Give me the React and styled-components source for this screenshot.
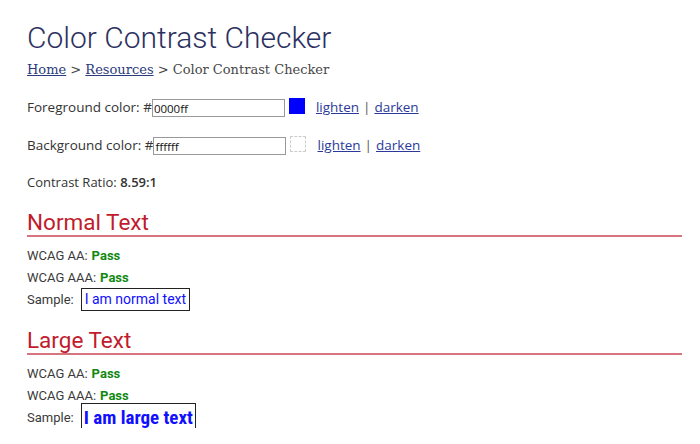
import React from 'react';
import styled, { createGlobalStyle } from 'styled-components';

const Global = createGlobalStyle`
  body {
    margin: 0;
    background: #fff;
    font-family: "Open Sans", "DejaVu Sans", sans-serif;
    color: #333;
  }
`;

const Page = styled.div`
  padding: 21px 18px 0 27px;
`;

const Title = styled.h1`
  margin: 0;
  font-family: Roboto, sans-serif;
  font-weight: 300;
  font-size: 30px;
  line-height: 34px;
  color: #2c3160;
`;

const Crumbs = styled.div`
  margin-top: 7px;
  font-family: "DejaVu Serif", serif;
  font-size: 13px;
  color: #484848;
  a {
    color: #2b3a7a;
  }
`;

const Field = styled.div`
  display: flex;
  align-items: center;
  margin-top: ${(p) => p.gap}px;
  font-size: 13.5px;
  height: 20px;
`;

const Input = styled.input`
  width: 129px;
  height: 16px;
  padding: 0 1px;
  margin: 2px 0 0 0;
  border: 1px solid #999;
  font-family: "Open Sans", sans-serif;
  font-size: 11.5px;
  color: #111;
`;

const Swatch = styled.span`
  width: 14px;
  height: 14px;
  margin: -3px 11px 0 4px;
  background: ${(p) => p.bg};
  border: 1px dashed ${(p) => (p.bg === '#fff' ? '#ccc' : '#00f')};
`;

const Link = styled.a`
  color: #2b3a9a;
`;

const Sep = styled.span`
  margin: 0 4px;
  color: #555;
`;

const Ratio = styled.div`
  margin-top: 18px;
  font-size: 13px;
  b {
    font-weight: 600;
  }
`;

const Heading = styled.h2`
  margin: ${(p) => p.top}px 0 0;
  font-family: Roboto, sans-serif;
  font-weight: 400;
  font-size: 22.5px;
  line-height: 26px;
  color: #c11b2d;
  border-bottom: 2px solid #d7757e;
`;

const Rows = styled.div`
  margin-top: 7px;
  font-family: Roboto, sans-serif;
  font-size: 13px;
  color: #3a3a3a;
`;

const Row = styled.div`
  height: 22px;
  display: flex;
  align-items: center;
`;

const Pass = styled.b`
  color: #118811;
  margin-left: 4px;
  font-weight: 700;
`;

const Sample = styled.span`
  margin-left: 7px;
  border: 1px solid #222;
  padding: ${(p) => (p.large ? '1px 2px' : '1px 3px')};
  color: #1010ff;
  font-family: ${(p) => (p.large ? '"Roboto Condensed", Roboto, sans-serif' : 'Roboto, sans-serif')};
  font-size: ${(p) => (p.large ? '19px' : '14px')};
  line-height: ${(p) => (p.large ? '25px' : '19px')};
  font-weight: ${(p) => (p.large ? 700 : 400)};
`;

const Section = ({ title, top, large }) => (
  <>
    <Heading top={top}>{title}</Heading>
    <Rows>
      <Row>WCAG AA:<Pass>Pass</Pass></Row>
      <Row>WCAG AAA:<Pass>Pass</Pass></Row>
      <Row>
        Sample:
        <Sample large={large}>{large ? 'I am large text' : 'I am normal text'}</Sample>
      </Row>
    </Rows>
  </>
);

export default function App() {
  return (
    <Page>
      <Global />
      <Title>Color Contrast Checker</Title>
      <Crumbs>
        <a href="#">Home</a> &gt; <a href="#">Resources</a> &gt; Color Contrast Checker
      </Crumbs>
      <Field gap={20}>
        Foreground color: #<Input defaultValue="0000ff" />
        <Swatch bg="#00f" />
        <Link href="#">lighten</Link>
        <Sep>|</Sep>
        <Link href="#">darken</Link>
      </Field>
      <Field gap={18}>
        Background color: #<Input defaultValue="ffffff" />
        <Swatch bg="#fff" />
        <Link href="#">lighten</Link>
        <Sep>|</Sep>
        <Link href="#">darken</Link>
      </Field>
      <Ratio>
        Contrast Ratio: <b>8.59:1</b>
      </Ratio>
      <Section title="Normal Text" top={18} />
      <Section title="Large Text" top={17} large />
    </Page>
  );
}
